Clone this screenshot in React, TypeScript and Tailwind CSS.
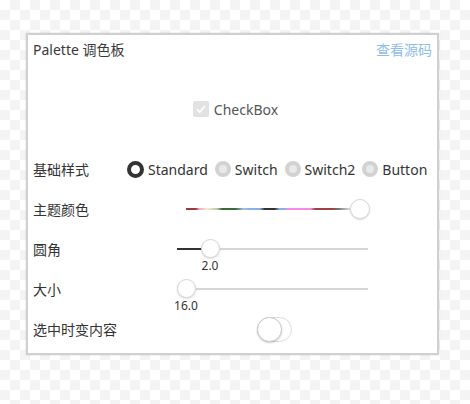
import React, { useState } from "react";

const font = {
  fontFamily: '"Noto Sans", "Noto Sans CJK SC", sans-serif',
};

function Radio({ label, checked }: { label: string; checked?: boolean }) {
  return (
    <div className="flex items-center gap-[4px]">
      <span
        className={
          checked
            ? "w-[17px] h-[17px] rounded-full border-[4px] border-[#333] bg-white"
            : "w-[16px] h-[16px] rounded-full border-[4px] border-[#d2d2d2] bg-[#e9e9e9]"
        }
      />
      <span className="text-[14px] text-[#333]">{label}</span>
    </div>
  );
}

function Slider({
  left,
  width,
  pos,
  value,
  fill,
}: {
  left: number;
  width: number;
  pos: number;
  value?: string;
  fill?: boolean;
}) {
  return (
    <div className="relative h-[2px]" style={{ marginLeft: left, width }}>
      <div className="absolute inset-0 bg-[#d6d6d6]" />
      {fill && (
        <div className="absolute left-0 top-0 h-[2px] bg-[#333]" style={{ width: pos }} />
      )}
      <div
        className="absolute top-[-9px] w-[19px] h-[19px] rounded-full bg-white border border-[#d8d8d8] shadow-[0_1px_2px_rgba(0,0,0,0.15)]"
        style={{ left: pos - 9 }}
      />
      {value && (
        <div
          className="absolute top-[11px] -translate-x-1/2 text-[12px] leading-[14px] text-[#333]"
          style={{ left: pos }}
        >
          {value}
        </div>
      )}
    </div>
  );
}

export default function App() {
  const [on] = useState(false);

  return (
    <div
      className="w-[470px] h-[404px] pt-[33px] pl-[26px] bg-[repeating-conic-gradient(#f4f4f4_0%_25%,#ffffff_0%_50%)] bg-[length:20px_20px]"
      style={font}
    >
      <div className="w-[413px] h-[322px] bg-white border-2 border-[#d0d0d0] shadow-[0_0_2px_rgba(0,0,0,0.15)]">
        {/* header */}
        <div className="flex justify-between items-center pt-[3px] px-[5px] h-[26px]">
          <span className="text-[14px] text-[#3a3a3a]">Palette 调色板</span>
          <span className="text-[14px] text-[#8ebde6]">查看源码</span>
        </div>

        <div className="flex justify-center items-center gap-[5px] mt-[38px] h-[20px] pl-[6px]">
          <span className="w-[16px] h-[16px] rounded-[2px] bg-[#e2e2e2] flex items-center justify-center">
            <svg width="12" height="12" viewBox="0 0 12 12">
              <path d="M2 6.2 L4.8 9 L10 3" stroke="#fff" strokeWidth="1.6" fill="none" />
            </svg>
          </span>
          <span className="text-[14px] text-[#555]">CheckBox</span>
        </div>

        <div className="mt-[30px]">
          <div className="flex items-center h-[40px] pl-[5px]">
            <span className="w-[94px] text-[14px] text-[#333]">基础样式</span>
            <div className="flex items-center gap-[7px]">
              <Radio label="Standard" checked />
              <Radio label="Switch" />
              <Radio label="Switch2" />
              <Radio label="Button" />
            </div>
          </div>

          <div className="flex items-center h-[40px] pl-[5px]">
            <span className="w-[94px] text-[14px] text-[#333]">主题颜色</span>
            <div className="relative h-[2px] ml-[59px] w-[172px]">
              <div className="absolute left-0 top-0 h-[2px] w-[164px] bg-[linear-gradient(to_right,#9b3b3b_0%,#9b3b3b_6%,#f2a2c8_8%,#f4f0c4_13%,#b8c8a8_19%,#3a6a3a_22%,#3a6a3a_30%,#a8c0d8_35%,#88b0e8_39%,#88b0e8_45%,#333_48%,#333_54%,#88b0e8_57%,#88b0e8_60%,#f58ae6_62%,#f58ae6_76%,#a04040_79%,#a04040_89%,#777_93%,#ddd_100%)]" />
              <div className="absolute top-[-9px] left-[164px] w-[20px] h-[20px] rounded-full bg-white border border-[#d8d8d8] shadow-[0_1px_2px_rgba(0,0,0,0.15)]" />
            </div>
          </div>

          <div className="flex items-center h-[40px] pl-[5px]">
            <span className="w-[94px] text-[14px] text-[#333]">圆角</span>
            <Slider left={50} width={191} pos={33} value="2.0" fill />
          </div>

          <div className="flex items-center h-[40px] pl-[5px]">
            <span className="w-[94px] text-[14px] text-[#333]">大小</span>
            <Slider left={50} width={191} pos={9} value="16.0" />
          </div>

          <div className="flex items-center h-[40px] pl-[5px]">
            <span className="w-[94px] text-[14px] text-[#333]">选中时变内容</span>
            <div className="ml-[130px] relative w-[35px] h-[25px] rounded-full border border-[#dcdcdc] bg-white">
              <div
                className={
                  "absolute top-[-1px] w-[25px] h-[25px] rounded-full bg-white border border-[#c8c8c8] shadow-[0_1px_2px_rgba(0,0,0,0.2)] " +
                  (on ? "left-[9px]" : "left-[-1px]")
                }
              />
            </div>
          </div>
        </div>
      </div>
    </div>
  );
}
